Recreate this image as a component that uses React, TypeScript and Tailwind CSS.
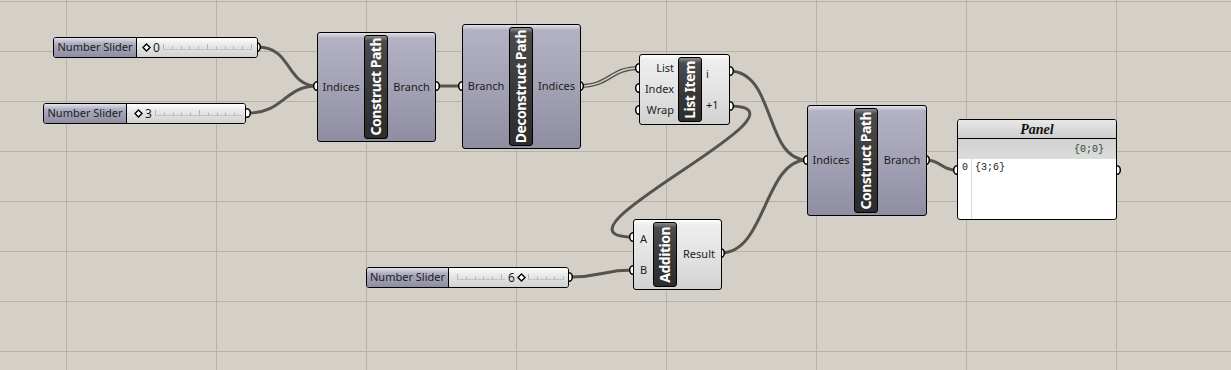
import React from 'react';

// Grasshopper canvas: two sliders -> Construct Path -> Deconstruct Path -> List Item, plus Addition, into a Panel

const purpleBg =
  'bg-[linear-gradient(to_bottom,#e2e2ea_0px,#b3b2c4_5px,#a5a4b7_45%,#8e8da2_100%)]';
const lightBg =
  'bg-[linear-gradient(to_bottom,#ffffff_0px,#eeeeee_5px,#e3e3e3_50%,#d2d2d2_100%)]';
const barBg =
  'bg-[linear-gradient(to_bottom,#8c8c8c_0px,#4b4b4b_5px,#3a3a3a_50%,#2c2c2c_100%)]';

interface NodeProps {
  className: string;
  label: string;
  inputs: string[];
  outputs: string[];
  leftW: string;
  light?: boolean;
  inAlign?: string;
  outAlign?: string;
}

const GhNode: React.FC<NodeProps> = ({ className, label, inputs, outputs, leftW, light, inAlign, outAlign }) => (
  <div
    className={`absolute flex rounded-[3px] border border-black font-['Noto_Sans',sans-serif] text-[11px] text-[#1c1c1c] ${
      light ? lightBg : purpleBg
    } ${className}`}
  >
    <div className={`flex flex-col py-[3px] ${leftW}`}>
      {inputs.map((p) => (
        <div key={p} className={`flex flex-1 items-center ${inAlign ?? 'justify-center'}`}>
          {p}
        </div>
      ))}
    </div>
    <div className={`my-[2px] flex w-[24px] items-center justify-center rounded-[3px] border border-black ${barBg}`}>
      <span className="rotate-180 text-[14px] leading-none font-bold tracking-[-0.5px] text-white [writing-mode:vertical-rl]">
        {label}
      </span>
    </div>
    <div className="flex flex-1 flex-col py-[3px]">
      {outputs.map((p) => (
        <div key={p} className={`flex flex-1 items-center ${outAlign ?? 'justify-center'}`}>
          {p}
        </div>
      ))}
    </div>
  </div>
);

const Diamond = () => (
  <svg width="9" height="9" viewBox="0 0 9 9" className="shrink-0">
    <path d="M4.5 1 L8 4.5 L4.5 8 L1 4.5 Z" fill="#fff" stroke="#000" strokeWidth="1.4" />
  </svg>
);

const Ticks = ({ w }: { w: number }) => {
  const n = Math.floor(w / 8.8);
  return (
    <svg width={w} height="9" className="shrink-0">
      <line x1="0" y1="6.5" x2={w} y2="6.5" stroke="#c3c3c3" />
      {Array.from({ length: n + 1 }).map((_, i) => (
        <line
          key={i}
          x1={Math.round(i * 8.8) + 0.5}
          y1={i % 5 === 0 ? 1 : 3.5}
          x2={Math.round(i * 8.8) + 0.5}
          y2="6.5"
          stroke="#b5b5b5"
        />
      ))}
    </svg>
  );
};

const SliderLabel = ({ w }: { w: string }) => (
  <div className={`flex items-center justify-center border-r border-black ${purpleBg} ${w}`}>Number Slider</div>
);

const wires = [
  'M258,47 C292,47 286,86 317,86',
  'M248,113 C284,113 284,86 317,86',
  'M435,86 L462,86',
  'M729,71 C776,71 764,160 807,160',
  'M729,106 C829,106 533,237 633,237',
  'M721,253 C766,253 764,160 807,160',
  'M570,277 C602,277 602,270 633,270',
  'M926,160 C941,160 941,170 956,170',
];

const grips: [number, number][] = [
  [257, 47], [247, 113], [436, 86], [580, 86], [730, 71], [730, 106], [721, 253], [569, 277], [926, 160], [1117, 170],
  [317, 86], [462, 86], [639, 68], [639, 88], [639, 110], [633, 237], [633, 270], [807, 160], [957, 170],
];

export default function App() {
  return (
    <div className="relative h-[370px] w-[1231px] overflow-hidden bg-[#d4d0c8]">
      {/* canvas grid */}
      <svg className="absolute inset-0" width="1231" height="370">
        {[66, 216, 366, 516, 666, 816, 966, 1116].map((x) => (
          <line key={x} x1={x + 0.5} y1="0" x2={x + 0.5} y2="370" stroke="#b6b2aa" />
        ))}
        {[1, 51, 101, 151, 201, 251, 301, 351].map((y) => (
          <line key={y} x1="0" y1={y + 0.5} x2="1231" y2={y + 0.5} stroke="#b6b2aa" />
        ))}
      </svg>

      {/* wires and grips */}
      <svg className="absolute inset-0" width="1231" height="370">
        {wires.map((d) => (
          <path key={d} d={d} fill="none" stroke="#56534e" strokeWidth="3" />
        ))}
        <path d="M580,86 C610,86 610,68 639,68" fill="none" stroke="#56534e" strokeWidth="4.2" />
        <path d="M580,86 C610,86 610,68 639,68" fill="none" stroke="#d4d0c8" strokeWidth="1.4" />
        {grips.map(([x, y]) => (
          <ellipse key={`${x}-${y}`} cx={x} cy={y} rx="3.3" ry="4.3" fill="#fff" stroke="#000" strokeWidth="1.5" />
        ))}
      </svg>

      {/* sliders */}
      <div className="absolute top-[37px] left-[53px] flex h-[21px] w-[205px] overflow-hidden rounded-[3px] border border-black font-['Noto_Sans',sans-serif] text-[11px] text-[#1c1c1c]">
        <SliderLabel w="w-[83px]" />
        <div className={`flex flex-1 items-center gap-[2px] pl-[5px] text-[12px] ${lightBg}`}>
          <Diamond />
          <span className="mr-[1px]">0</span>
          <Ticks w={89} />
        </div>
      </div>
      <div className="absolute top-[103px] left-[43px] flex h-[21px] w-[203px] overflow-hidden rounded-[3px] border border-black font-['Noto_Sans',sans-serif] text-[11px] text-[#1c1c1c]">
        <SliderLabel w="w-[83px]" />
        <div className={`flex flex-1 items-center gap-[2px] pl-[7px] text-[12px] ${lightBg}`}>
          <Diamond />
          <span className="mr-[1px]">3</span>
          <Ticks w={87} />
        </div>
      </div>
      <div className="absolute top-[267px] left-[366px] flex h-[21px] w-[203px] overflow-hidden rounded-[3px] border border-black font-['Noto_Sans',sans-serif] text-[11px] text-[#1c1c1c]">
        <SliderLabel w="w-[82px]" />
        <div className={`flex flex-1 items-center gap-[2px] pl-[8px] text-[12px] ${lightBg}`}>
          <Ticks w={48} />
          <span className="ml-[1px]">6</span>
          <Diamond />
          <Ticks w={36} />
        </div>
      </div>

      {/* components */}
      <GhNode
        className="top-[32px] left-[317px] h-[110px] w-[119px]"
        label="Construct Path"
        inputs={['Indices']}
        outputs={['Branch']}
        leftW="w-[46px]"
      />
      <GhNode
        className="top-[24px] left-[462px] h-[125px] w-[119px]"
        label="Deconstruct Path"
        inputs={['Branch']}
        outputs={['Indices']}
        leftW="w-[46px]"
      />
      <GhNode
        className="top-[54px] left-[639px] h-[71px] w-[91px]"
        label="List Item"
        inputs={['List', 'Index', 'Wrap']}
        outputs={['i', '+1']}
        leftW="w-[38px]"
        light
        inAlign="justify-end pr-[4px]"
        outAlign="justify-start pl-[4px]"
      />
      <GhNode
        className="top-[219px] left-[633px] h-[71px] w-[89px]"
        label="Addition"
        inputs={['A', 'B']}
        outputs={['Result']}
        leftW="w-[19px]"
        light
      />
      <GhNode
        className="top-[105px] left-[807px] h-[111px] w-[120px]"
        label="Construct Path"
        inputs={['Indices']}
        outputs={['Branch']}
        leftW="w-[46px]"
      />

      {/* panel */}
      <div className="absolute top-[119px] left-[957px] flex h-[101px] w-[160px] flex-col overflow-hidden rounded-[3px] border border-black bg-white">
        <div className="flex h-[19px] shrink-0 items-center justify-center border-b border-black bg-[linear-gradient(to_bottom,#e8e8e8,#cdcdcd)] font-['Liberation_Serif',serif] text-[14px] font-bold text-[#111] italic">
          Panel
        </div>
        <div className="flex flex-1 font-['Liberation_Mono',monospace] text-[10px]">
          <div className="flex w-[14px] flex-col border-r border-[#d8d8d8]">
            <div className="h-[20px] bg-[linear-gradient(to_bottom,#d2d2d2,#dcdcdc)]" />
            <div className="pt-[3px] pl-[4px] leading-[12px] text-[#222]">0</div>
          </div>
          <div className="flex flex-1 flex-col">
            <div className="flex h-[20px] items-center justify-end bg-[linear-gradient(to_bottom,#d2d2d2,#dcdcdc)] pr-[12px] text-[#2e462e]">
              {'{0;0}'}
            </div>
            <div className="pt-[3px] pl-[3px] leading-[12px] text-[#222]">{'{3;6}'}</div>
          </div>
        </div>
      </div>
    </div>
  );
}
